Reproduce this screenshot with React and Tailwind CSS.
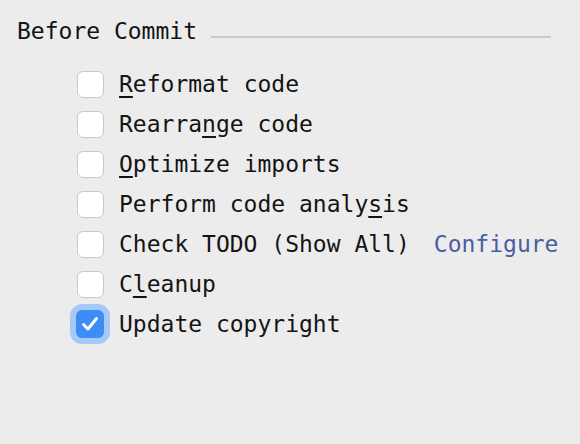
import React from 'react';

const Mn = ({ children }) => (
  <span className="underline decoration-2 underline-offset-[4px]">{children}</span>
);

const items = [
  { id: 'reformat', label: <><Mn>R</Mn>eformat code</>, checked: false },
  { id: 'rearrange', label: <>Rearra<Mn>n</Mn>ge code</>, checked: false },
  { id: 'optimize', label: <><Mn>O</Mn>ptimize imports</>, checked: false },
  { id: 'analysis', label: <>Perform code analy<Mn>s</Mn>is</>, checked: false },
  { id: 'todo', label: <>Check TODO (Show All)</>, checked: false, link: 'Configure' },
  { id: 'cleanup', label: <>C<Mn>l</Mn>eanup</>, checked: false },
  { id: 'copyright', label: <>Update copyright</>, checked: true },
];

const Checkbox = ({ checked }) => (
  <div className="w-[28px] h-[28px] flex items-center justify-center">
    {checked ? (
      <div className="w-[28px] h-[28px] rounded-[6px] bg-[#3c8df5] ring-[6px] ring-[#a6c9f6] flex items-center justify-center">
        <svg width="20" height="18" viewBox="0 0 20 18" fill="none">
          <path d="M3.5 9.5 L8 14 L16.5 3.5" stroke="white" strokeWidth="3" strokeLinecap="round" strokeLinejoin="round" />
        </svg>
      </div>
    ) : (
      <div className="w-[27px] h-[27px] rounded-[6px] bg-white border border-[#c8c8c8]" />
    )}
  </div>
);

export default function App() {
  return (
    <div className="w-full h-[444px] bg-[#ececec] text-[#141414] font-['DejaVu_Sans_Mono',monospace] text-[23px]">
      <div className="flex items-center pl-[17px] pt-[16px] pr-[29px]">
        <span className="leading-[30px]">Before Commit</span>
        <div className="flex-1 h-[2px] bg-[#cbcbcb] ml-[14px] mt-[12px]" />
      </div>
      <div className="flex flex-col pl-[76px] pt-[18px]">
        {items.map((it) => (
          <div key={it.id} className="flex items-center h-[40px]">
            <Checkbox checked={it.checked} />
            <span className="ml-[15px] whitespace-nowrap">{it.label}</span>
            {it.link && <span className="ml-[24px] text-[#4b5ca0]">{it.link}</span>}
          </div>
        ))}
      </div>
    </div>
  );
}
